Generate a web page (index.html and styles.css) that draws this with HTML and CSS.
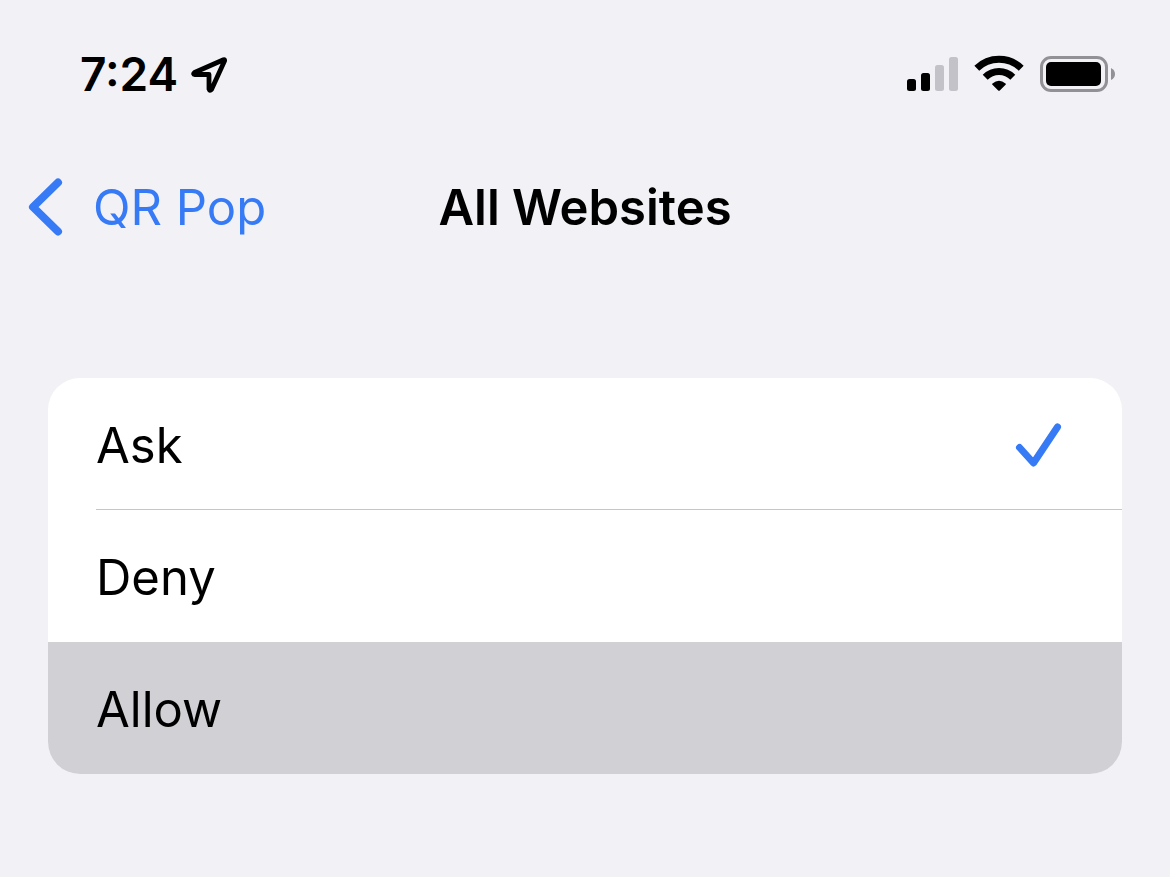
FILE: index.html
```html
<!DOCTYPE html>
<html lang="en">
<head>
<meta charset="utf-8">
<meta name="viewport" content="width=device-width, initial-scale=1">
<title>All Websites</title>
<link rel="stylesheet" href="styles.css">
</head>
<body>
<div class="status">
  <div class="clock"><time>7:24</time>
    <svg class="location" viewBox="0 0 38 38" width="38" height="38" aria-hidden="true"><path d="M33.500 4.800L4.500 17.500Q2.500 19.200 5 19.500H19V34Q19.800 36.500 21.500 34.500L34.500 6Q35 4.300 33.500 4.800Z"/></svg>
  </div>
  <div class="indicators">
    <svg width="52" height="36" viewBox="0 0 52 36" aria-hidden="true"><rect x="1" y="23" width="9" height="12" rx="2.500"/><rect x="15" y="17" width="9" height="18" rx="2.500"/><g fill="#c3c2c8"><rect x="29" y="9" width="9" height="26" rx="2.500"/><rect x="43" y="1" width="9" height="34" rx="2.500"/></g></svg>
    <svg class="wifi" width="50" height="36" viewBox="0 0 50 36" aria-hidden="true"><path d="M25.800 34.500Q25 35.200 24.200 34.500L18.200 28.600Q17.800 28 18.500 27.500Q25 22 31.500 27.500Q32.200 28 31.800 28.600Z"/><g fill="none" stroke="#000" stroke-width="7"><path d="M2.800 12.200A32 32 0 0 1 47.200 12.200"/><path d="M11.200 21.200A19.500 19.500 0 0 1 38.800 21.200"/></g></svg>
    <svg width="76" height="36" viewBox="0 0 76 36" aria-hidden="true"><rect x="1.500" y="1.500" width="65" height="33" rx="9.500" fill="none" stroke="#929196" stroke-width="3"/><rect x="6" y="6" width="55" height="24" rx="5"/><path d="M71 12Q75 14 75 18T71 24Z" fill="#929196"/></svg>
  </div>
</div>
<header class="nav">
  <a class="back" href="#"><svg width="36" height="60" viewBox="0 0 36 60" aria-hidden="true"><path d="M30 5.500L5 30L30 54.500"/></svg>QR Pop</a>
  <h1 class="title">All Websites</h1>
</header>
<main class="options">
  <button class="option" type="button" aria-pressed="true">Ask<svg width="48" height="48" viewBox="0 0 48 48" aria-hidden="true"><path d="M4.500 25.500L18.500 41L42.500 5"/></svg></button>
  <button class="option" type="button">Deny</button>
  <button class="option option-active" type="button">Allow</button>
</main>
</body>
</html>
```
FILE: styles.css
```css
* { box-sizing: border-box; }
body { margin: 0; background: #f2f1f6; color: #000; font-family: Inter, sans-serif; }
svg { display: block; flex: none; }
.status { display: flex; justify-content: space-between; align-items: center; height: 148px; padding: 0 54px 0 80px; }
.clock { display: flex; align-items: center; gap: 12px; font-size: 46px; font-weight: 600; }
.location path { fill: none; stroke: #000; stroke-width: 4.8; stroke-linejoin: round; }
.indicators { display: flex; gap: 16px; }
.wifi { overflow: visible; }
.nav { display: grid; grid-template-columns: 1fr auto 1fr; align-items: center; height: 118px; padding: 0 28px; }
.back { display: flex; align-items: center; gap: 29px; color: #367af6; font-size: 49px; text-decoration: none; }
.back path, .option path { fill: none; stroke: #367af6; stroke-width: 7; stroke-linecap: round; stroke-linejoin: round; }
.back path { stroke-width: 8; }
.title { margin: 0; font-size: 49px; font-weight: 600; }
.options { margin: 112px 48px 0; border-radius: 32px; background: #fff; overflow: hidden; }
.option { position: relative; display: flex; justify-content: space-between; align-items: center; width: 100%; height: 132px; border: 0; padding: 3px 59px 0 48px; background: none; color: #000; font: 49px Inter, sans-serif; text-align: left; }
.option:first-child::after { content: ""; position: absolute; left: 48px; right: 0; bottom: 0; height: 1px; background: #c6c6c8; }
.option-active { background: #d1d0d5; }
```
